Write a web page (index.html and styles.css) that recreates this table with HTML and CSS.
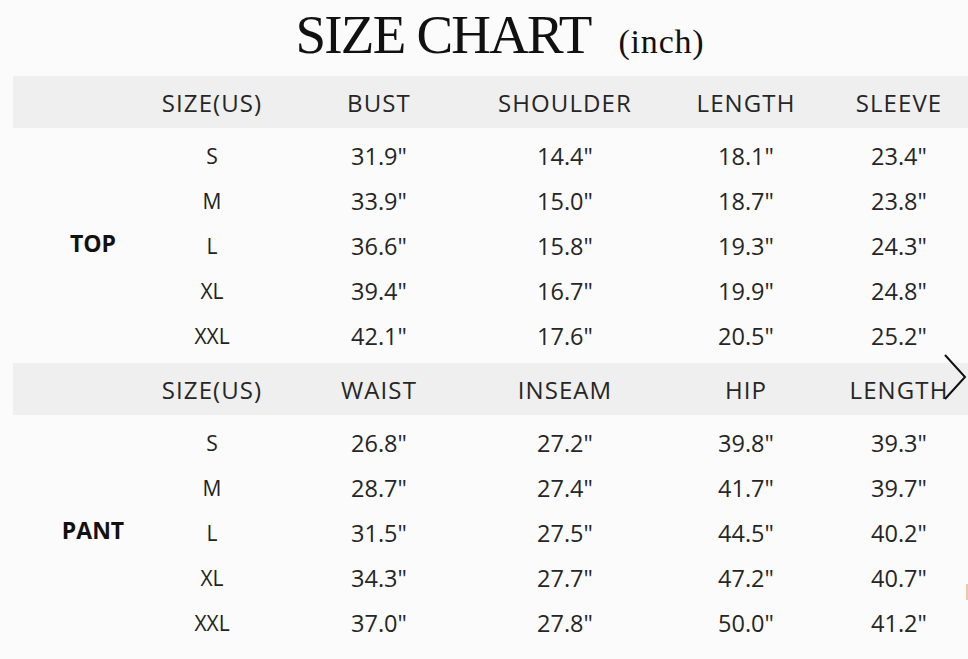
FILE: index.html
```html
<!DOCTYPE html>
<html>
<head>
<meta charset="utf-8">
<link rel="stylesheet" href="styles.css">
</head>
<body>
<div class="page">
  <h1 class="title"><span class="title-main">SIZE CHART</span><span class="title-unit">(inch)</span></h1>

  <section class="chart">
    <div class="head">
      <div class="cell"></div>
      <div class="cell">SIZE(US)</div>
      <div class="cell">BUST</div>
      <div class="cell">SHOULDER</div>
      <div class="cell">LENGTH</div>
      <div class="cell">SLEEVE</div>
      <div class="cell"></div>
    </div>
    <div class="body">
      <div class="cat">TOP</div>
      <div class="cell size">S</div><div class="cell">31.9"</div><div class="cell">14.4"</div><div class="cell">18.1"</div><div class="cell">23.4"</div>
      <div class="cell size">M</div><div class="cell">33.9"</div><div class="cell">15.0"</div><div class="cell">18.7"</div><div class="cell">23.8"</div>
      <div class="cell size">L</div><div class="cell">36.6"</div><div class="cell">15.8"</div><div class="cell">19.3"</div><div class="cell">24.3"</div>
      <div class="cell size">XL</div><div class="cell">39.4"</div><div class="cell">16.7"</div><div class="cell">19.9"</div><div class="cell">24.8"</div>
      <div class="cell size">XXL</div><div class="cell">42.1"</div><div class="cell">17.6"</div><div class="cell">20.5"</div><div class="cell">25.2"</div>
    </div>
  </section>

  <section class="chart">
    <div class="head">
      <div class="cell"></div>
      <div class="cell">SIZE(US)</div>
      <div class="cell">WAIST</div>
      <div class="cell">INSEAM</div>
      <div class="cell">HIP</div>
      <div class="cell">LENGTH</div>
      <div class="cell"></div>
    </div>
    <div class="body">
      <div class="cat">PANT</div>
      <div class="cell size">S</div><div class="cell">26.8"</div><div class="cell">27.2"</div><div class="cell">39.8"</div><div class="cell">39.3"</div>
      <div class="cell size">M</div><div class="cell">28.7"</div><div class="cell">27.4"</div><div class="cell">41.7"</div><div class="cell">39.7"</div>
      <div class="cell size">L</div><div class="cell">31.5"</div><div class="cell">27.5"</div><div class="cell">44.5"</div><div class="cell">40.2"</div>
      <div class="cell size">XL</div><div class="cell">34.3"</div><div class="cell">27.7"</div><div class="cell">47.2"</div><div class="cell">40.7"</div>
      <div class="cell size">XXL</div><div class="cell">37.0"</div><div class="cell">27.8"</div><div class="cell">50.0"</div><div class="cell">41.2"</div>
    </div>
  </section>

  <svg class="next" width="24" height="46" viewBox="0 0 24 46"><path d="M2 1 L22 23 L2 45" fill="none" stroke="#111" stroke-width="2"/></svg>
  <span class="speck"></span>
</div>
</body>
</html>
```

FILE: styles.css
```css
html, body {
  margin: 0;
  padding: 0;
  background: #fbfbfb;
}
.page {
  position: relative;
  width: 968px;
  height: 659px;
  overflow: hidden;
  font-family: "Open Sans", "Liberation Sans", sans-serif;
  color: #262626;
}
.title {
  margin: 0;
  height: 76px;
  display: flex;
  align-items: baseline;
  justify-content: center;
  font-family: "Liberation Serif", "Times New Roman", serif;
  font-weight: normal;
  color: #111;
  line-height: 1;
  padding-left: 32px;
  box-sizing: border-box;
}
.title-main {
  font-size: 55px;
  letter-spacing: -1.8px;
  margin-top: 7px;
}
.title-unit {
  font-size: 34px;
  margin-left: 28px;
  letter-spacing: 0.8px;
}
.chart {
  margin-left: 13px;
  width: 955px;
}
.head {
  display: grid;
  grid-template-columns: 160px 78px 256px 116px 246px 60px 1fr;
  height: 52px;
  background: #efefef;
  font-size: 24px;
  letter-spacing: 1.1px;
}
.body {
  display: grid;
  grid-template-columns: 160px 78px 256px 116px 246px 60px;
  grid-template-rows: repeat(5, 45px);
  padding: 5px 0;
  font-size: 23.5px;
}
.cell {
  display: flex;
  align-items: center;
  justify-content: center;
  white-space: nowrap;
}
.cat {
  grid-column: 1;
  grid-row: 1 / 6;
  display: flex;
  align-items: center;
  justify-content: center;
  font-weight: 700;
  font-size: 23px;
  color: #111;
  padding-bottom: 6px;
}
.size {
  grid-column: 2;
  font-size: 21px;
  color: #222;
}
.next {
  position: absolute;
  left: 943px;
  top: 354px;
}
.speck {
  position: absolute;
  left: 966px;
  top: 584px;
  width: 2px;
  height: 16px;
  background: #f0c9a4;
}
```
